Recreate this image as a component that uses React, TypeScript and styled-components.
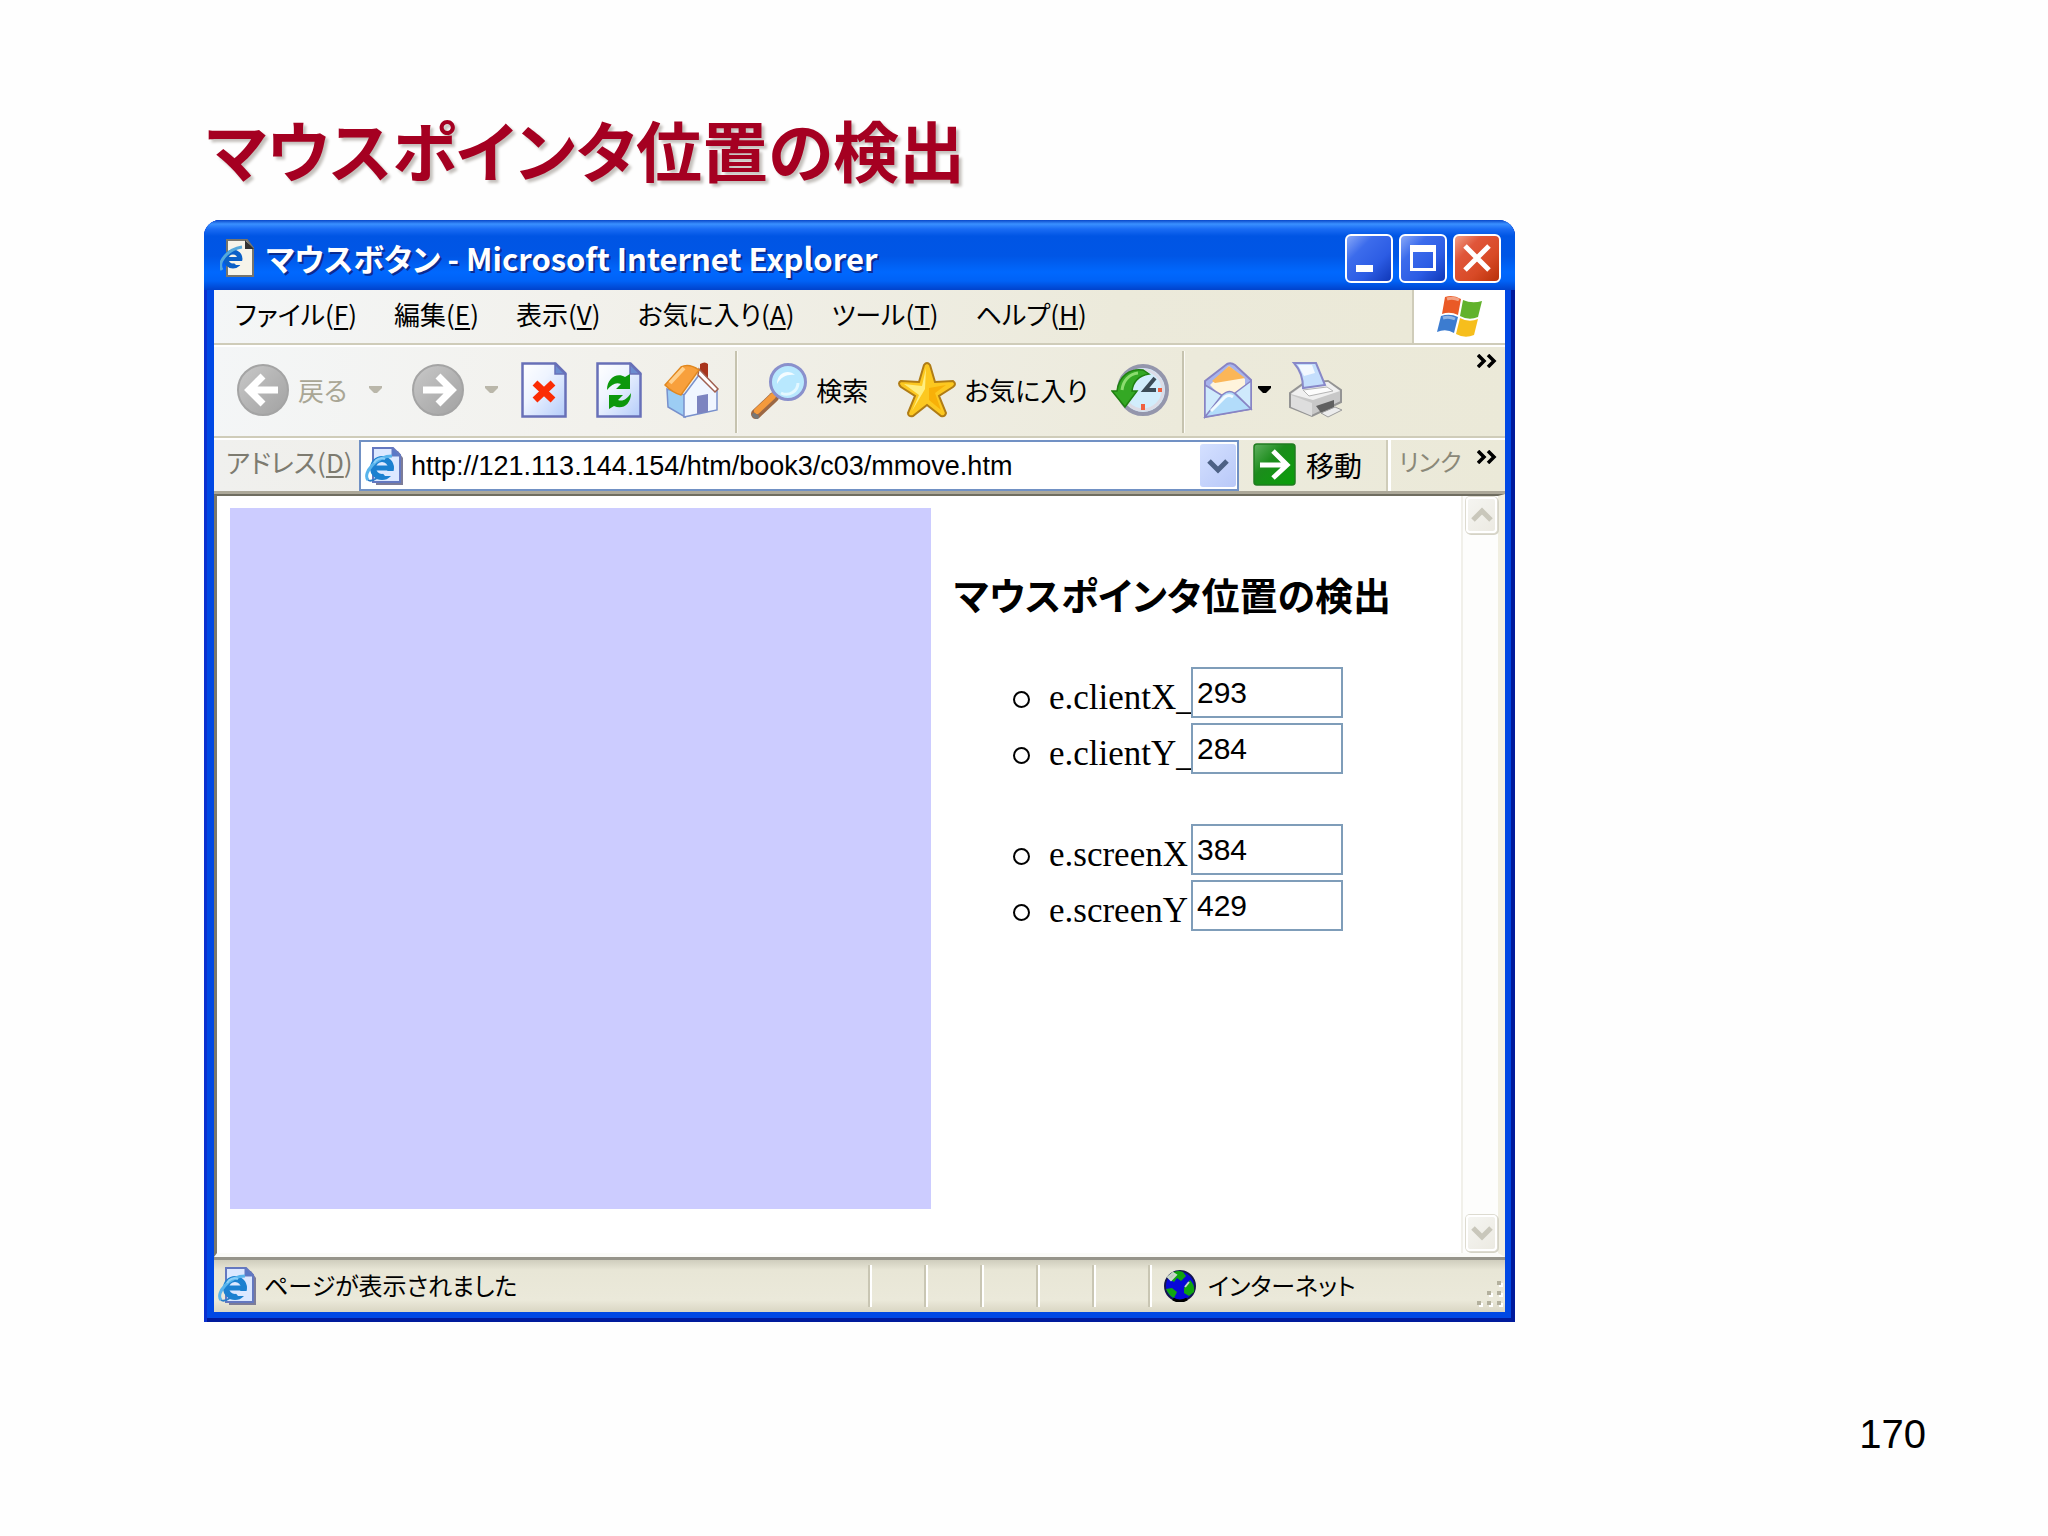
import React from 'react';
import styled, { createGlobalStyle, css } from 'styled-components';

const sans = `"Liberation Sans", "Noto Sans CJK JP", sans-serif`;
const gothic = `"Noto Sans CJK JP", "Liberation Sans", sans-serif`;

const GlobalStyle = createGlobalStyle`
  *, *::before, *::after { box-sizing: border-box; }
  body { margin: 0; background: #fefefe; color: #000; font-family: ${gothic}; }
  button, input { font: inherit; color: inherit; border: 0; padding: 0; margin: 0; background: none; border-radius: 0; }
  svg { display: block; flex: none; }
`;

const Slide = styled.main`
  padding: 108px 122px 60px 204px;
`;

const SlideTitle = styled.h1`
  margin: 0 0 32px;
  padding-left: 2px;
  font-size: 66px;
  line-height: 80px;
  font-weight: 700;
  font-feature-settings: "palt";
  color: #a50021;
  text-shadow: 3px 3px 3px #c4c0bc;
`;

const PageNumber = styled.footer`
  margin-top: 88px;
  font-family: ${sans};
  font-size: 40px;
  line-height: 48px;
  text-align: right;
`;

const BrowserWindow = styled.section`
  max-width: 1311px;
  padding: 0 10px 10px;
  border-radius: 16px 16px 0 0;
  background: #0048e4;
  box-shadow: inset 3px 0 0 #0a30d0, inset -4px -4px 0 #001a9c;
  overflow: hidden;
`;

const TitleBar = styled.header`
  display: flex;
  align-items: center;
  gap: 8px;
  height: 70px;
  margin: 0 -10px;
  padding: 6px 14px 0 16px;
  background: linear-gradient(#0846c8 0, #3a90ff 4px, #1a6cf4 9px, #0055e4 16px, #0056e6 36px, #0068fe 52px, #0062f6 61px, #0042cc 70px);
`;

const WindowTitle = styled.h2`
  flex: 1;
  margin: 0;
  font-size: 31px;
  line-height: 40px;
  font-weight: 700;
  font-feature-settings: "palt";
  color: #fff;
  text-shadow: 2px 2px 0 #0a2c90;
  white-space: nowrap;
`;

const CaptionButtons = styled.div`
  display: flex;
  gap: 6px;
`;

const CaptionButton = styled.button<{ $close?: boolean }>`
  width: 48px;
  height: 49px;
  display: grid;
  place-items: center;
  border: 2px solid #fff;
  border-radius: 6px;
  background: ${p => (p.$close
    ? 'linear-gradient(135deg, #f0a088 0, #e0563a 30%, #d84a26 65%, #b83008 100%)'
    : 'linear-gradient(135deg, #88a8f8 0, #3c6cec 30%, #2c5ce4 65%, #1038b8 100%)')};
`;

const barSurface = css`
  border-bottom: 2px solid #cfccb9;
  background: linear-gradient(100deg, #f4f6f7 0, #f2f1ec 30%, #eceadb 75%, #ebe9d8 100%);
`;

const MenuRow = styled.nav`
  display: flex;
  height: 55px;
`;

const MenuList = styled.ul`
  ${barSurface}
  flex: 1;
  display: flex;
  align-items: center;
  gap: 37px;
  margin: 0;
  padding: 0 0 6px 21px;
  list-style: none;
  border-right: 2px solid #cfccb9;
`;

const MenuButton = styled.button`
  font-size: 26px;
  line-height: 36px;
  font-feature-settings: "palt";
  white-space: nowrap;
  u { text-decoration-thickness: 2px; text-underline-offset: 3px; }
`;

const Throbber = styled.div`
  width: 91px;
  display: grid;
  place-items: center;
  background: #fff;
  border-bottom: 2px solid #cfccb9;
`;

const Toolbar = styled.div`
  ${barSurface}
  display: flex;
  align-items: center;
  height: 93px;
  border-top: 2px solid #fff;
  padding: 0 7px 0 22px;
`;

const ToolButton = styled.button<{ $off?: boolean; $gap: number }>`
  display: flex;
  align-items: center;
  gap: 8px;
  margin-right: ${p => p.$gap}px;
  padding-bottom: 3px;
  color: ${p => (p.$off ? '#a9a695' : '#000')};
  font-size: 26px;
  line-height: 36px;
  font-feature-settings: "palt";
  white-space: nowrap;
`;

const Divider = styled.span<{ $gap: number }>`
  width: 3px;
  height: 82px;
  margin-right: ${p => p.$gap}px;
  border-left: 2px solid #c6c3af;
  border-right: 1px solid #fbfaf5;
`;

const Overflow = styled.button`
  align-self: flex-start;
  margin-left: auto;
  padding-top: 7px;
`;

const AddressRow = styled.div`
  display: flex;
  height: 56px;
  border-top: 2px solid #fff;
  border-bottom: 3px solid #aca899;
  background: linear-gradient(90deg, #f0f0ee 0, #efeee6 30%, #ebe9d8 100%);
`;

const AddressLabel = styled.label`
  width: 145px;
  padding: 4px 0 0 12px;
  font-size: 26px;
  line-height: 36px;
  font-feature-settings: "palt";
  color: #7d7b70;
  white-space: nowrap;
  u { text-decoration-thickness: 2px; text-underline-offset: 3px; }
`;

const AddressBox = styled.div`
  flex: 1;
  display: flex;
  align-items: center;
  gap: 8px;
  min-width: 0;
  padding: 0 1px 0 4px;
  border: 2px solid #7191c4;
  background: #fff;
`;

const AddressInput = styled.input`
  flex: 1;
  min-width: 0;
  height: 44px;
  padding-top: 2px;
  font-family: ${sans};
  font-size: 27px;
  outline: 0;
`;

const DropButton = styled.button`
  width: 36px;
  height: 43px;
  display: grid;
  place-items: center;
  border-radius: 3px;
  background: linear-gradient(135deg, #d4e0ff, #b8c8f8);
`;

const GoButton = styled.button`
  display: flex;
  align-items: center;
  gap: 10px;
  width: 149px;
  padding: 0 0 2px 14px;
  font-size: 28px;
  line-height: 36px;
`;

const Links = styled.div`
  display: flex;
  width: 117px;
  padding: 3px 7px 0 8px;
  border-left: 3px solid #fff;
  box-shadow: -2px 0 0 #cfccb9;
  font-size: 24px;
  line-height: 36px;
  font-feature-settings: "palt";
  color: #8a8878;
  white-space: nowrap;
`;

const Viewport = styled.div`
  display: flex;
  border-top: 2px solid #6f6d60;
  border-left: 3px solid #7a786c;
  border-right: 7px solid #f1efe2;
  border-bottom: 4px solid #fbfbf8;
  background: #fff;
`;

const Page = styled.div`
  flex: 1;
  display: flex;
  align-items: flex-start;
  gap: 23px;
  padding: 12px 0 44px 13px;
`;

const TrackArea = styled.div`
  flex: none;
  width: 701px;
  aspect-ratio: 1;
  background: #ccccff;
`;

const Report = styled.article`
  flex: 1;
  padding-top: 58px;
`;

const ReportTitle = styled.h3`
  margin: 0 0 45px;
  font-size: 38px;
  line-height: 56px;
  font-weight: 700;
  font-feature-settings: "palt";
  white-space: nowrap;
`;

const FieldList = styled.ul`
  margin: 0 0 50px;
  padding: 0 0 0 59px;
  list-style: none;
`;

const Field = styled.li`
  display: flex;
  align-items: center;
  height: 51px;
  margin-bottom: 5px;
`;

const Bullet = styled.span`
  flex: none;
  width: 17px;
  height: 17px;
  margin: 14px 19px 0 0;
  border: 2px solid #000;
  border-radius: 50%;
`;

const FieldLabel = styled.label`
  width: 142px;
  padding-top: 10px;
  font-family: "Liberation Serif", "Noto Sans CJK JP", serif;
  font-size: 35px;
  line-height: 40px;
  white-space: nowrap;
`;

const FieldInput = styled.input`
  position: relative;
  width: 152px;
  height: 51px;
  padding: 0 4px;
  border: 2px solid #7f9db9;
  background: #fff;
  font-family: ${sans};
  font-size: 30px;
  outline: 0;
`;

const Scrollbar = styled.div`
  display: flex;
  flex-direction: column;
  justify-content: space-between;
  width: 37px;
  padding: 1px 1px 2px 3px;
  border-left: 2px solid #f1f0ea;
  background: #fdfdfc;
`;

const ScrollButton = styled.button`
  height: 36px;
  display: grid;
  place-items: center;
  border: 2px solid #fff;
  border-radius: 4px;
  background: linear-gradient(135deg, #f5f5f1, #eceae2);
  box-shadow: 0 0 0 1px #dddbd0, 1px 1px 0 1px #d5d3c6;
`;

const StatusBar = styled.footer`
  display: flex;
  align-items: center;
  height: 55px;
  border-top: 3px solid #96948a;
  background: linear-gradient(#cfcdbd 0, #e8e6d6 10px, #ebe9da 40px, #d9d6c3 100%);
  padding-left: 4px;
  font-size: 24px;
  line-height: 36px;
  font-feature-settings: "palt";
  white-space: nowrap;
`;

const StatusText = styled.span`
  flex: 1;
  padding: 0 0 3px 8px;
`;

const StatusPane = styled.span<{ $wide?: boolean }>`
  display: flex;
  align-items: center;
  gap: 12px;
  width: ${p => (p.$wide ? 357 : 56)}px;
  height: 42px;
  padding-left: ${p => (p.$wide ? 14 : 0)}px;
  border-left: 2px solid #c9c6b3;
  box-shadow: inset 2px 0 0 #fff;
`;

const ZoneText = styled.span`
  padding-bottom: 3px;
`;

const Grip = styled.svg`
  align-self: flex-end;
  margin: 0 2px 0 auto;
`;

const IePage = ({ size = 38 }: { size?: number }) => (
  <svg width={size} height={size} viewBox="0 0 38 38">
    <path d="M11 4h22l5 7v27H11z" fill="#7c7c98" />
    <path d="M8 1h20l7 7v27H8z" fill="#dce8ff" stroke="#6478c0" strokeWidth="2" />
    <path d="M27 1v8h8z" fill="#5878c8" stroke="#6478c0" strokeWidth="1" />
    <circle cx="17" cy="21" r="9" fill="none" stroke="#1b80d0" strokeWidth="6" />
    <path d="M16 24h14v5H20z" fill="#dce8ff" />
    <path d="M10 21h18" stroke="#1b80d0" strokeWidth="5" />
    <path d="M3 33C-3 26 12 9 27 9" fill="none" stroke="#58b4ec" strokeWidth="3" />
    <path d="M3 33c3 2 6 0 9-2" fill="none" stroke="#2a7cc8" strokeWidth="2" />
    <path d="M9 16c2-4 7-6 11-4" fill="none" stroke="#8cd0f8" strokeWidth="2" />
  </svg>
);

const IeTitleIcon = () => (
  <svg width="38" height="38" viewBox="0 0 38 38">
    <path d="M7 1h20l6 8v28H7z" fill="#f6f4ea" stroke="#77756c" strokeWidth="2" />
    <path d="M25 1v9h9z" fill="#333" />
    <circle cx="13" cy="20" r="7" fill="none" stroke="#0a60c8" strokeWidth="5" />
    <path d="M12 22h12v4H16z" fill="#f6f4ea" />
    <path d="M7 20h15" stroke="#0a60c8" strokeWidth="4" />
    <path d="M2 31C-3 23 8 10 22 8" fill="none" stroke="#54a8dc" strokeWidth="3" />
  </svg>
);

const RoundArrow = ({ flip }: { flip?: boolean }) => (
  <svg width="54" height="54" viewBox="0 0 54 54">
    <defs>
      <linearGradient id="disc" x1="0" y1="0" x2="1" y2="1">
        <stop offset="0" stopColor="#c9c9c9" /><stop offset=".5" stopColor="#b4b4b4" /><stop offset="1" stopColor="#a2a2a2" />
      </linearGradient>
    </defs>
    <circle cx="27" cy="27" r="25" fill="url(#disc)" stroke="#a4a4a4" strokeWidth="2" />
    <g transform={flip ? 'matrix(-1 0 0 1 54 0)' : undefined}>
      <path d="M42 27H15M27 13 13 27l14 14" fill="none" stroke="#fff" strokeWidth="7" />
    </g>
  </svg>
);

const Triangle = ({ color }: { color: string }) => (
  <svg width="13" height="8" viewBox="0 0 13 8"><path d="M0 0h13v2L8 7H5L0 2z" fill={color} /></svg>
);

const Sheet = ({ children }: { children: React.ReactNode }) => (
  <svg width="46" height="56" viewBox="0 0 46 56">
    <defs>
      <linearGradient id="sheet" x1="0" y1="0" x2="1" y2="1">
        <stop offset="0" stopColor="#fff" /><stop offset=".4" stopColor="#eef4ff" /><stop offset="1" stopColor="#b4ccfa" />
      </linearGradient>
    </defs>
    <path d="M1.500 1.500h33l10 10v43h-43z" fill="url(#sheet)" stroke="#6870b8" strokeWidth="2.500" />
    <path d="M34 2v10h10z" fill="#6c8cd0" stroke="#6870b8" strokeWidth="1.500" />
    {children}
  </svg>
);

const StopIcon = () => (
  <Sheet><path d="m14 21 18 17M32 21 14 38" stroke="#fb2c04" strokeWidth="7" /></Sheet>
);

const RefreshIcon = () => (
  <Sheet>
    <path d="M11 28c0-12 10-18 18-13l5-3v15H20l5-5c-5-2-9 0-14 6z" fill="#0c980c" />
    <path d="M35 31c0 12-9 17-17 13l-5 3V33h14l-5 5c5 2 9-1 13-7z" fill="#0c980c" />
  </Sheet>
);

const HomeIcon = () => (
  <svg width="56" height="58" viewBox="0 0 56 58">
    <path d="M36 3q5-3 8 0v17l-8-8z" fill="#a8341c" />
    <path d="M3 28 21 34v22L4 46z" fill="#9ccdf4" stroke="#7890cc" strokeWidth="1.500" />
    <path d="M20 34 35 14l18 15v20L20 56z" fill="#f0f6ff" stroke="#7890cc" strokeWidth="1.500" />
    <path d="m35 8 19 20-3 3-17-17z" fill="#fff" stroke="#a06050" strokeWidth="1.500" />
    <path d="M1 24 17 6q8-4 18 3L17 34Q9 32 1 24z" fill="#f8a03c" stroke="#e08820" strokeWidth="1.500" />
    <path d="m6 22 14-15" stroke="#ffd08c" strokeWidth="4" />
    <path d="M33 35l11-2v18l-11 2z" fill="#7c84c0" />
  </svg>
);

const SearchIcon = () => (
  <svg width="57" height="57" viewBox="0 0 57 57">
    <path d="M5 52 23 35" stroke="#9c6844" strokeWidth="10" strokeLinecap="round" />
    <path d="M6 49 22 34" stroke="#f49a3c" strokeWidth="6" strokeLinecap="round" />
    <path d="m3 53 3 2" stroke="#777" strokeWidth="4" strokeLinecap="round" />
    <circle cx="37" cy="20" r="17.500" fill="#b8e8fe" stroke="#8a90cc" strokeWidth="3" />
    <path d="M26 22c0-12 12-15 18-9-8-1-14 2-18 9z" fill="#f4fcff" />
    <path d="M30 31c8 4 17-2 17-10" fill="none" stroke="#e4f8ff" strokeWidth="3" />
  </svg>
);

const StarIcon = () => (
  <svg width="58" height="56" viewBox="0 0 58 56">
    <path d="M26 3q3-4 6 0l5 17 18-1q4 3 0 6L41 34l7 17q-1 4-5 3L29 43 15 54q-5 1-5-3l7-17L3 25q-4-4 0-6l18 1z" fill="#fcc820" stroke="#b07c14" strokeWidth="2" />
    <path d="m28 6-4 18-18-2 15 11-7 16 13-22z" fill="#ffee80" />
    <path d="M31 26 48 23 37 31l6 17-12-10z" fill="#f8b008" />
  </svg>
);

const HistoryIcon = () => (
  <svg width="58" height="54" viewBox="0 0 58 54">
    <circle cx="32" cy="27" r="24" fill="#d2edfc" stroke="#9496ac" strokeWidth="4" />
    <circle cx="32" cy="27" r="20" fill="none" stroke="#dcdce6" strokeWidth="3" />
    <path d="m44 15-10 12h11" fill="none" stroke="#3c4c58" strokeWidth="4" />
    <path d="M32 41v6M47 27h4" stroke="#f06040" strokeWidth="4" />
    <path d="M1 28h5C8 13 19 5 32 7l6 4C27 13 22 19 21 28h5L14 44z" fill="#34a824" stroke="#208010" strokeWidth="1.500" />
    <path d="M11 27c1-9 7-16 16-17" fill="none" stroke="#8cdc70" strokeWidth="3" />
  </svg>
);

const MailIcon = () => (
  <svg width="50" height="58" viewBox="0 0 50 58">
    <path d="M2 20 24 3q4-2 8 1l16 15v29L2 56z" fill="#a8b4ec" stroke="#8884c4" strokeWidth="2" />
    <path d="M7 24 26 5l16 13v17L24 42z" fill="#fff4dc" />
    <path d="M9 20 26 5l16 12-30 5z" fill="#fbb658" />
    <path d="M2 24 20 35 2 56zM48 20 32 32l16 16z" fill="#cfeafc" stroke="#8884c4" strokeWidth="1.500" />
    <path d="M2 56 19 34q7-6 12-2l17 16z" fill="#b2dcfa" stroke="#8884c4" strokeWidth="1.500" />
    <path d="m8 50 14-14q4-3 8 0" fill="none" stroke="#f0faff" strokeWidth="3" />
  </svg>
);

const PrinterIcon = () => (
  <svg width="56" height="58" viewBox="0 0 56 58">
    <path d="M2 32 16 22l24-2 13 9v12L24 55 2 46z" fill="#c8c8c8" stroke="#949494" strokeWidth="2" />
    <path d="M3 33 17 23l23-2 12 9-27 9z" fill="#f0f0f0" />
    <path d="m3 34 21 8v13L3 46z" fill="#dedede" />
    <path d="M28 45 46 39v8l-12 6z" fill="#606060" />
    <path d="m33 52 14-6 7 3-14 7z" fill="#ececec" stroke="#9c9c9c" />
    <path d="M6 2h22l9 22-22 3Q15 12 6 2z" fill="#c4defc" stroke="#8888c8" strokeWidth="2" />
    <path d="m10 4 14 0 3 8-11 3z" fill="#f2f8ff" />
    <path d="m15 29 24-3 6 4-24 5z" fill="#fcfcfc" stroke="#b4b4b4" />
  </svg>
);

const Chevrons = () => (
  <svg width="21" height="14" viewBox="0 0 21 14">
    <path d="m1 1 6 6-6 6M11 1l6 6-6 6" fill="none" stroke="#000" strokeWidth="3.500" />
  </svg>
);

const Caret = ({ color, up }: { color: string; up?: boolean }) => (
  <svg width="22" height="16" viewBox="0 0 22 16">
    <path d={up ? 'm2 13 9-9 9 9' : 'm2 3 9 9 9-9'} fill="none" stroke={color} strokeWidth="5" />
  </svg>
);

const GoIcon = () => (
  <svg width="43" height="43" viewBox="0 0 43 43">
    <defs>
      <linearGradient id="go" x1="0" y1="0" x2="1" y2="1">
        <stop offset="0" stopColor="#60b060" /><stop offset=".4" stopColor="#1c8c1c" /><stop offset="1" stopColor="#08a008" />
      </linearGradient>
    </defs>
    <rect x="1" y="1" width="41" height="41" rx="3" fill="url(#go)" stroke="#207c20" strokeWidth="1.500" />
    <path d="M7 22h26M20 8l14 14-14 13" fill="none" stroke="#fff" strokeWidth="5" />
  </svg>
);

const WindowsFlag = () => (
  <svg width="48" height="44" viewBox="0 0 48 44">
    <path d="M9 2q8-3 16 2l-3 16q-8-4-16-1z" fill="#ea5a26" />
    <path d="M27 5q9 4 19 1l-4 16q-9 4-18-1z" fill="#62b22c" />
    <path d="M5 21q9-3 17 1l-4 16q-8-5-17-1z" fill="#3c7cd0" />
    <path d="M24 23q9 5 18 1l-4 16q-9 4-18-1z" fill="#f6be1c" />
    <path d="M11 4q6-2 12 1M7 23q6-2 12 1" stroke="#ffffff70" strokeWidth="3" fill="none" />
  </svg>
);

const Globe = () => (
  <svg width="32" height="32" viewBox="0 0 32 32">
    <circle cx="16" cy="16" r="15" fill="#0808d8" stroke="#14144c" strokeWidth="2" />
    <path d="M6 5q6-6 13-3l3 4-5 5-4-3-3 4-5-3zM20 18l6-8q5 5 4 12l-5 4-5-3zM2 19l6-1 5 4-3 6q-5-2-8-9z" fill="#10a410" />
    <path d="m4 7 5-4 3 2-5 5zM21 17l4-5" stroke="#c8d8c8" strokeWidth="2" fill="#c0c8c0" />
    <path d="M9 29q7 4 14 0" stroke="#000" strokeWidth="3" fill="none" />
  </svg>
);

const menus = [
  ['ファイル', 'F'], ['編集', 'E'], ['表示', 'V'], ['お気に入り', 'A'], ['ツール', 'T'], ['ヘルプ', 'H'],
];

const groups = [
  [['e.clientX_', '293'], ['e.clientY_', '284']],
  [['e.screenX', '384'], ['e.screenY', '429']],
];

const gripDots = [[20, 0], [10, 10], [20, 10], [0, 20], [10, 20], [20, 20]];

export default function App() {
  return (
    <>
      <GlobalStyle />
      <Slide>
        <SlideTitle>マウスポインタ位置の検出</SlideTitle>
        <BrowserWindow>
          <TitleBar>
            <IeTitleIcon />
            <WindowTitle>マウスボタン - Microsoft Internet Explorer</WindowTitle>
            <CaptionButtons>
              <CaptionButton aria-label="最小化">
                <svg width="38" height="38" viewBox="0 0 38 38"><path d="M6 26h17v7H6z" fill="#fff" /></svg>
              </CaptionButton>
              <CaptionButton aria-label="最大化">
                <svg width="38" height="38" viewBox="0 0 38 38"><path d="M6 6h26v26H6zM9 13v16h20V13z" fill="#fff" fillRule="evenodd" /></svg>
              </CaptionButton>
              <CaptionButton $close aria-label="閉じる">
                <svg width="38" height="38" viewBox="0 0 38 38"><path d="m7 7 24 24M31 7 7 31" stroke="#fff" strokeWidth="5" /></svg>
              </CaptionButton>
            </CaptionButtons>
          </TitleBar>

          <MenuRow>
            <MenuList>
              {menus.map(([name, key]) => (
                <li key={key}><MenuButton>{name}(<u>{key}</u>)</MenuButton></li>
              ))}
            </MenuList>
            <Throbber><WindowsFlag /></Throbber>
          </MenuRow>

          <Toolbar>
            <ToolButton $off $gap={22}><RoundArrow />戻る</ToolButton>
            <ToolButton $off $gap={29} aria-label="戻る履歴"><Triangle color="#bab7aa" /></ToolButton>
            <ToolButton $off $gap={20} aria-label="進む"><RoundArrow flip /></ToolButton>
            <ToolButton $off $gap={23} aria-label="進む履歴"><Triangle color="#bab7aa" /></ToolButton>
            <ToolButton $gap={29} aria-label="中止"><StopIcon /></ToolButton>
            <ToolButton $gap={22} aria-label="更新"><RefreshIcon /></ToolButton>
            <ToolButton $gap={15} aria-label="ホーム"><HomeIcon /></ToolButton>
            <Divider $gap={13} />
            <ToolButton $gap={30}><SearchIcon />検索</ToolButton>
            <ToolButton $gap={23}><StarIcon />お気に入り</ToolButton>
            <ToolButton $gap={13} aria-label="履歴"><HistoryIcon /></ToolButton>
            <Divider $gap={18} />
            <ToolButton $gap={5} aria-label="メール"><MailIcon /></ToolButton>
            <ToolButton $gap={17} aria-label="メールのメニュー"><Triangle color="#000" /></ToolButton>
            <ToolButton $gap={0} aria-label="印刷"><PrinterIcon /></ToolButton>
            <Overflow aria-label="その他のボタン"><Chevrons /></Overflow>
          </Toolbar>

          <AddressRow>
            <AddressLabel htmlFor="address">アドレス(<u>D</u>)</AddressLabel>
            <AddressBox>
              <IePage />
              <AddressInput id="address" defaultValue="http://121.113.144.154/htm/book3/c03/mmove.htm" />
              <DropButton aria-label="アドレスの一覧"><Caret color="#4d6185" /></DropButton>
            </AddressBox>
            <GoButton><GoIcon />移動</GoButton>
            <Links>
              リンク
              <Overflow aria-label="その他のリンク"><Chevrons /></Overflow>
            </Links>
          </AddressRow>

          <Viewport>
            <Page>
              <TrackArea />
              <Report>
                <ReportTitle>マウスポインタ位置の検出</ReportTitle>
                {groups.map((fields, i) => (
                  <FieldList key={i}>
                    {fields.map(([name, value]) => (
                      <Field key={name}>
                        <Bullet />
                        <FieldLabel htmlFor={name}>{name}</FieldLabel>
                        <FieldInput id={name} defaultValue={value} />
                      </Field>
                    ))}
                  </FieldList>
                ))}
              </Report>
            </Page>
            <Scrollbar>
              <ScrollButton aria-label="上へ"><Caret up color="#c9c7bb" /></ScrollButton>
              <ScrollButton aria-label="下へ"><Caret color="#c9c7bb" /></ScrollButton>
            </Scrollbar>
          </Viewport>

          <StatusBar>
            <IePage />
            <StatusText>ページが表示されました</StatusText>
            {[0, 1, 2, 3, 4].map(n => <StatusPane key={n} />)}
            <StatusPane $wide>
              <Globe />
              <ZoneText>インターネット</ZoneText>
              <Grip width="26" height="26" viewBox="0 0 26 26">
                {gripDots.map(([x, y]) => (
                  <g key={`${x}-${y}`}>
                    <rect x={x + 2} y={y + 2} width="4" height="4" fill="#fff" />
                    <rect x={x} y={y} width="4" height="4" fill="#b4b19e" />
                  </g>
                ))}
              </Grip>
            </StatusPane>
          </StatusBar>
        </BrowserWindow>
        <PageNumber>170</PageNumber>
      </Slide>
    </>
  );
}
